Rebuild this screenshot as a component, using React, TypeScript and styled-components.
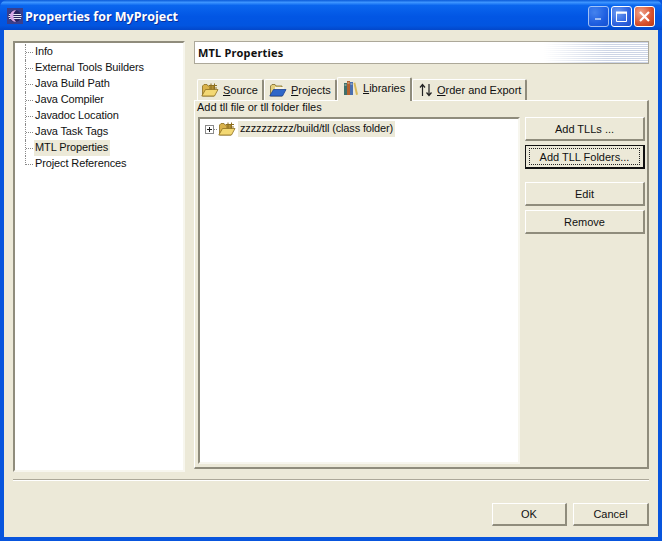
import React from "react";
import styled, { createGlobalStyle } from "styled-components";

const Global = createGlobalStyle`
  html, body { margin: 0; padding: 0; background: #ece9d8; }
  * { box-sizing: border-box; }
`;

const uiFont = `"Liberation Sans", "Noto Sans", sans-serif`;

const Win = styled.div`
  width: 662px;
  height: 541px;
  display: flex;
  flex-direction: column;
  background: #0855dd;
  font: 11px/14px ${uiFont};
  color: #111;
  overflow: hidden;
`;

const TitleBar = styled.div`
  height: 30px;
  flex: none;
  display: flex;
  align-items: center;
  padding: 2px 7px 0 7px;
  background: linear-gradient(180deg, #0a5ad8 0%, #3d95ff 8%, #0a66ee 18%, #0256e4 55%, #0255e0 85%, #0347ca 100%);
  border-radius: 7px 7px 0 0;
`;

const TitleText = styled.div`
  margin: 2px 0 0 2px;
  flex: 1;
  font: bold 12.5px/16px "Open Sans", "DejaVu Sans", sans-serif;
  color: #fff;
  text-shadow: 1px 1px 0 #0a2f9c;
`;

const CapButton = styled.div<{ $kind: "min" | "max" | "close" }>`
  width: 21px;
  height: 21px;
  margin-left: 2px;
  border: 1px solid #fff;
  border-radius: 3px;
  background: ${(p) =>
    p.$kind === "close"
      ? "radial-gradient(circle at 30% 30%, #f0a58c, #d8502c 60%, #b83a18)"
      : "radial-gradient(circle at 30% 30%, #6c9cf2, #2f63df 60%, #1f4dc8)"};
  opacity: ${(p) => (p.$kind === "min" ? 0.62 : 1)};
  display: flex;
  align-items: center;
  justify-content: center;
`;

const Body = styled.div`
  flex: 1;
  margin: 0 4px 4px;
  background: #ece9d8;
  padding: 11px 9px 0;
  display: flex;
  flex-direction: column;
  min-height: 0;
`;

const Main = styled.div`
  display: flex;
  gap: 9px;
  height: 431px;
  flex: none;
`;

const sunken = `
  border-style: solid;
  border-width: 2px;
  border-color: #8f8c7c #f7f6ee #f7f6ee #8f8c7c;
  background: #fff;
`;

const Nav = styled.div`
  ${sunken}
  width: 172px;
  flex: none;
  padding: 1px 0 0 10px;
`;

const NavRow = styled.div`
  height: 16px;
  display: flex;
  align-items: center;
  white-space: nowrap;
`;

const Connector = styled.span<{ $last?: boolean }>`
  align-self: flex-start;
  width: 9px;
  height: ${(p) => (p.$last ? "9px" : "16px")};
  flex: none;
  border-left: 1px dotted #8a8a8a;
  background: repeating-linear-gradient(90deg, #8a8a8a 0 1px, transparent 1px 2px) 0 8px / 100% 1px no-repeat;
`;

const NavLabel = styled.span<{ $selected?: boolean }>`
  padding: 0 2px 0 1px;
  height: 16px;
  line-height: 15px;
  letter-spacing: -0.12px;
  background: ${(p) => (p.$selected ? "#ece9d8" : "transparent")};
`;

const Right = styled.div`
  flex: 1;
  min-width: 0;
  display: flex;
  flex-direction: column;
`;

const Banner = styled.div`
  height: 23px;
  flex: none;
  border: 1px solid #aca899;
  padding: 0 3px;
  font: bold 11px/21px "Noto Sans", sans-serif;
  letter-spacing: 0.2px;
  background:
    linear-gradient(90deg, #fff 0, #fff 77%, rgba(255, 255, 255, 0) 91%),
    repeating-linear-gradient(180deg, #cdd5e6 0 1px, #fff 1px 2px);
`;

const TabStrip = styled.div`
  height: 24px;
  flex: none;
  margin-top: 12px;
  padding-left: 3px;
  display: flex;
  align-items: flex-end;
  position: relative;
  z-index: 1;
`;

const Tab = styled.div<{ $active?: boolean; $w: number; $pad: number }>`
  width: ${(p) => p.$w}px;
  height: ${(p) => (p.$active ? 24 : 21)}px;
  margin-bottom: ${(p) => (p.$active ? -1 : 0)}px;
  display: flex;
  align-items: center;
  gap: 4px;
  padding: ${(p) => (p.$active ? `0 0 3px ${p.$pad}px` : `0 0 0 ${p.$pad}px`)};
  border-top: 1px solid #fff;
  border-left: 1px solid #fff;
  border-right: 2px solid #8f8c7c;
  border-radius: 2px 2px 0 0;
  background: #ece9d8;
  white-space: nowrap;
`;

const Key = styled.span`
  text-decoration: underline;
`;

const Pane = styled.div`
  height: 369px;
  flex: none;
  border-style: solid;
  border-width: 1px 2px 2px 1px;
  border-color: #fff #8f8c7c #8f8c7c #fff;
  padding: 0 3px 3px 3px;
  display: flex;
  flex-direction: column;
`;

const PaneLabel = styled.div`
  height: 16px;
  flex: none;
  margin-left: -1px;
  line-height: 12px;
`;

const PaneBody = styled.div`
  flex: 1;
  display: flex;
  gap: 5px;
  min-height: 0;
`;

const LibTree = styled.div`
  ${sunken}
  flex: none;
  width: 322px;
  padding: 2px 0 0 5px;
`;

const LibRow = styled.div`
  display: flex;
  align-items: center;
  height: 16px;
`;

const Expander = styled.span`
  width: 9px;
  height: 9px;
  flex: none;
  border: 1px solid #8a8a8a;
  background:
    linear-gradient(#222, #222) center / 5px 1px no-repeat,
    linear-gradient(#222, #222) center / 1px 5px no-repeat,
    #fff;
`;

const Dash = styled.span`
  width: 4px;
  height: 1px;
  flex: none;
  background: repeating-linear-gradient(90deg, #8a8a8a 0 1px, transparent 1px 2px);
`;

const LibLabel = styled.span`
  margin-left: 2px;
  padding: 0 2px;
  background: #ece9d8;
  height: 16px;
  line-height: 15px;
  letter-spacing: -0.15px;
  white-space: nowrap;
`;

const Buttons = styled.div`
  width: 120px;
  flex: none;
  display: flex;
  flex-direction: column;
`;

const Btn = styled.div<{ $focused?: boolean; $gap?: number; $w?: number; $h?: number }>`
  width: ${(p) => (p.$w ? `${p.$w}px` : "100%")};
  height: ${(p) => p.$h ?? 24}px;
  flex: none;
  margin-top: ${(p) => p.$gap ?? 0}px;
  display: flex;
  align-items: center;
  justify-content: center;
  border-style: solid;
  border-width: 1px 2px 2px 1px;
  border-color: #fff #8f8c7c #8f8c7c #fff;
  background: #ece9d8;
  position: relative;
  ${(p) =>
    p.$focused
      ? `
    border-color: #111;
    &::after {
      content: "";
      position: absolute;
      inset: 2px 3px 2px 3px;
      border: 1px dotted #222;
    }`
      : ""}
`;

const Divider = styled.div`
  height: 2px;
  flex: none;
  margin: 7px 0 0;
  background: #aca899;
  border-bottom: 1px solid #fff;
`;

const Footer = styled.div`
  display: flex;
  justify-content: flex-end;
  gap: 6px;
  margin-top: 22px;
`;

const YellowFolderIcon = () => (
  <svg width="18" height="14" viewBox="0 0 18 14" style={{ flex: "none" }}>
    <path d="M1.5 3 L1.5 13 L13 13 L13 3 L7 3 L6 1.5 L3 1.5 Z" fill="#d9b24c" stroke="#8d6f20" strokeWidth="0.8" />
    <path d="M10 0.5 V7 M13.5 0.5 V7 M8 2.5 H16 M8 5 H16" stroke="#8d6f20" strokeWidth="1" fill="none" />
    <path d="M0.8 13 L4.5 6.5 L17 6.5 L13.5 13 Z" fill="#f3d873" stroke="#8d6f20" strokeWidth="0.8" />
  </svg>
);

const BlueFolderIcon = () => (
  <svg width="18" height="14" viewBox="0 0 18 14" style={{ flex: "none" }}>
    <path d="M1.5 3 L1.5 13 L13 13 L13 3 L7 3 L6 1.5 L3 1.5 Z" fill="#e4cf7c" stroke="#7d6a2a" strokeWidth="0.8" />
    <path d="M6 4 H15 V7 H6 Z" fill="#f6f3e2" />
    <path d="M0.8 13 L4.5 6.5 L17 6.5 L13.5 13 Z" fill="#2f67c8" stroke="#1b3f8f" strokeWidth="0.8" />
  </svg>
);

const BooksIcon = () => (
  <svg width="16" height="16" viewBox="0 0 16 16" style={{ flex: "none" }}>
    <rect x="1" y="3" width="3" height="12" fill="#3f6f6a" />
    <rect x="4" y="1" width="3" height="14" fill="#b5602d" />
    <rect x="7" y="2" width="3" height="13" fill="#4a6fb0" />
    <path d="M10.5 3 L12.3 2.5 L15 14.5 L13 15 Z" fill="#d9b95a" />
    <path d="M1.5 5 H3.5 M4.5 3 H6.5 M7.5 4 H9.5" stroke="#e8e4d0" strokeWidth="0.8" />
  </svg>
);

const ArrowsIcon = () => (
  <svg width="14" height="14" viewBox="0 0 14 14" style={{ flex: "none" }}>
    <path d="M3.5 13 V2 M1 4.5 L3.5 1.5 L6 4.5 M10 1 V12 M7.5 9.5 L10 12.5 L12.5 9.5" stroke="#222" strokeWidth="1.2" fill="none" />
  </svg>
);

const EclipseIcon = () => (
  <svg width="16" height="16" viewBox="0 0 16 16" style={{ flex: "none" }}>
    <rect x="0" y="0" width="16" height="16" fill="#3a3f8c" />
    <circle cx="8" cy="8" r="6" fill="#2a2560" />
    <path d="M2 6.5 H14 M1.5 8.5 H14.5 M2 10.5 H14" stroke="#e8e8f4" strokeWidth="1" />
    <path d="M9 2 A6 6 0 0 0 9 14 A8 8 0 0 1 9 2" fill="#d8a8e8" />
  </svg>
);

const navItems = [
  "Info",
  "External Tools Builders",
  "Java Build Path",
  "Java Compiler",
  "Javadoc Location",
  "Java Task Tags",
  "MTL Properties",
  "Project References",
];

export default function App() {
  return (
    <Win>
      <Global />
      <TitleBar>
        <EclipseIcon />
        <TitleText>Properties for MyProject</TitleText>
        <CapButton $kind="min">
          <svg width="10" height="10" viewBox="0 0 10 10"><rect x="1" y="7" width="6" height="2" fill="#fff" /></svg>
        </CapButton>
        <CapButton $kind="max">
          <svg width="13" height="13" viewBox="0 0 13 13"><path d="M1.5 3 H11.5 V11.5 H1.5 Z" fill="none" stroke="#fff" /><rect x="1" y="1.5" width="11" height="2" fill="#fff" /></svg>
        </CapButton>
        <CapButton $kind="close">
          <svg width="13" height="13" viewBox="0 0 13 13"><path d="M2 2 L11 11 M11 2 L2 11" stroke="#fff" strokeWidth="2.2" /></svg>
        </CapButton>
      </TitleBar>
      <Body>
        <Main>
          <Nav>
            {navItems.map((n, i) => (
              <NavRow key={n}>
                <Connector $last={i === navItems.length - 1} />
                <NavLabel $selected={n === "MTL Properties"}>{n}</NavLabel>
              </NavRow>
            ))}
          </Nav>
          <Right>
            <Banner>MTL Properties</Banner>
            <TabStrip>
              <Tab $w={67} $pad={3}><YellowFolderIcon /><span><Key>S</Key>ource</span></Tab>
              <Tab $w={73} $pad={4}><BlueFolderIcon /><span><Key>P</Key>rojects</span></Tab>
              <Tab $w={75} $pad={5} $active><BooksIcon /><span><Key>L</Key>ibraries</span></Tab>
              <Tab $w={115} $pad={6}><ArrowsIcon /><span><Key>O</Key>rder and Export</span></Tab>
            </TabStrip>
            <Pane>
              <PaneLabel>Add tll file or tll folder files</PaneLabel>
              <PaneBody>
                <LibTree>
                  <LibRow>
                    <Expander />
                    <Dash />
                    <YellowFolderIcon />
                    <LibLabel>zzzzzzzzzz/build/tll (class folder)</LibLabel>
                  </LibRow>
                </LibTree>
                <Buttons>
                  <Btn>Add TLLs ...</Btn>
                  <Btn $gap={4} $focused>Add TLL Folders...</Btn>
                  <Btn $gap={13}>Edit</Btn>
                  <Btn $gap={4}>Remove</Btn>
                </Buttons>
              </PaneBody>
            </Pane>
          </Right>
        </Main>
        <Divider />
        <Footer>
          <Btn $w={75} $h={23}>OK</Btn>
          <Btn $w={76} $h={23}>Cancel</Btn>
        </Footer>
      </Body>
    </Win>
  );
}
